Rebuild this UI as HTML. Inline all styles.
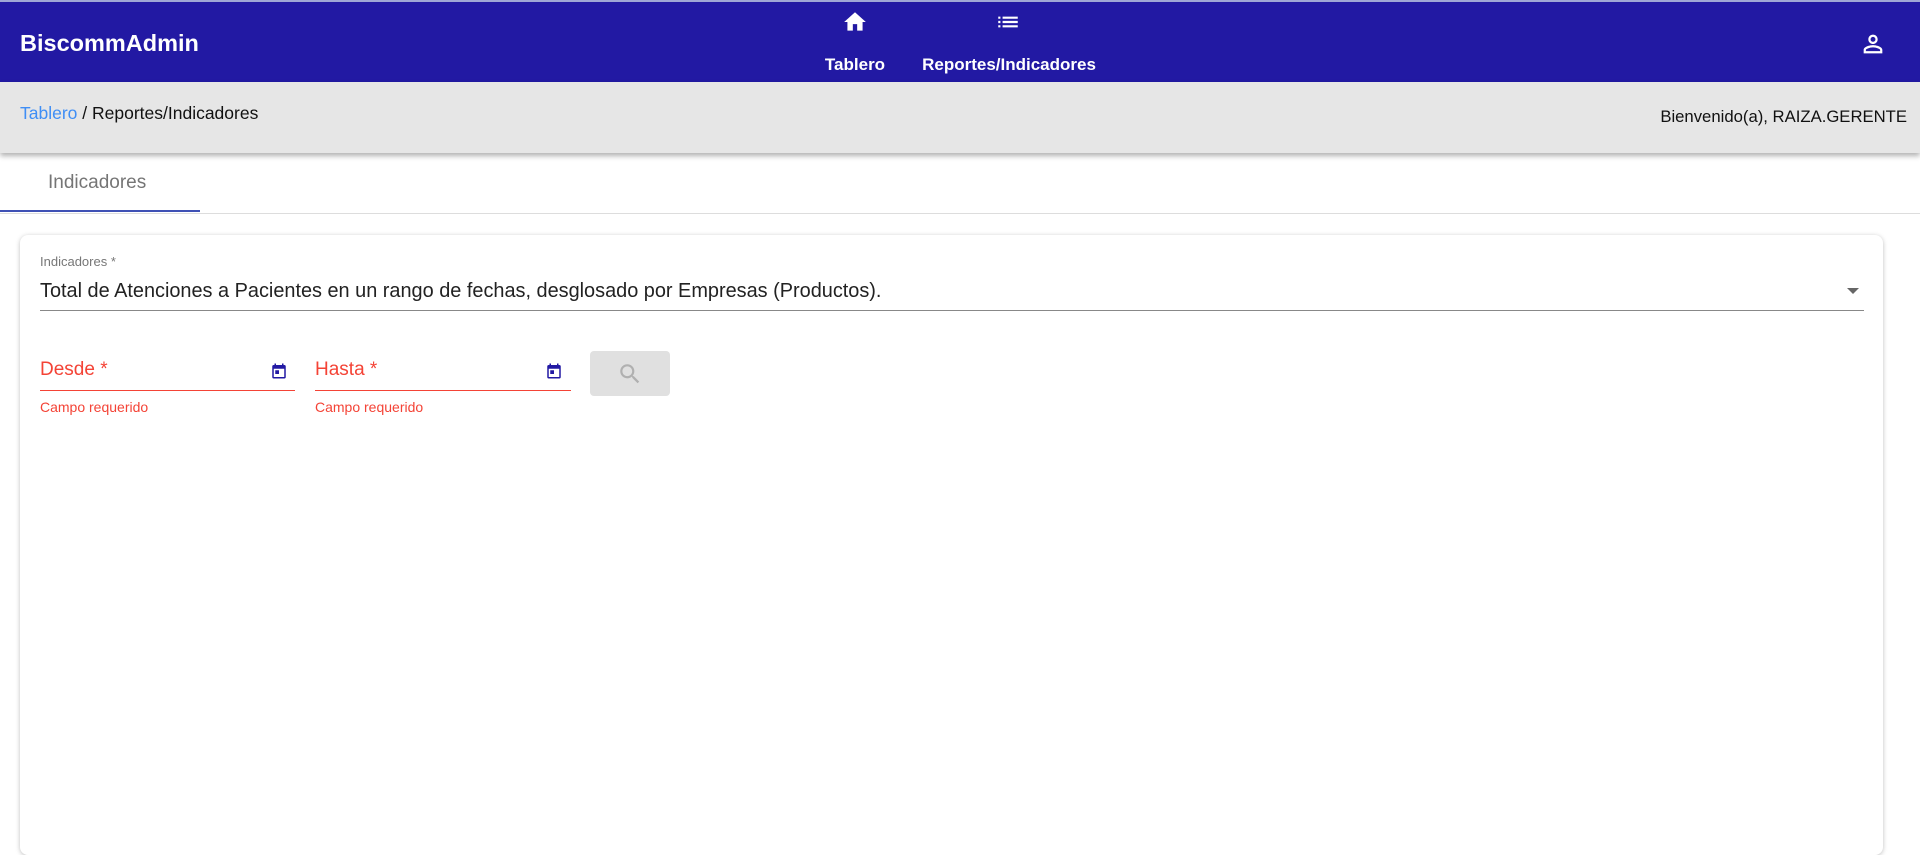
<!DOCTYPE html>
<html><head><meta charset="utf-8"><style>
*{box-sizing:border-box;margin:0;padding:0}
body{width:1920px;height:833px;overflow:hidden;background:#fff;font-family:"Liberation Sans",sans-serif;position:relative}
.hdr{position:absolute;left:0;top:0;width:1920px;height:82px;background:#2219a3;border-top:2px solid #9fa6d6;color:#fff}
.brand{position:absolute;left:20px;top:28px;font-size:23.5px;font-weight:bold}
.crumb{position:absolute;left:0;top:82px;width:1920px;height:71px;background:#e6e6e6;box-shadow:0 3px 5px rgba(0,0,0,.3);font-size:17px;color:#111}
.abs{position:absolute;white-space:nowrap}
.tabline{position:absolute;left:0;top:213px;width:1920px;height:1px;background:#ddd}
.card{position:absolute;left:20px;top:235px;width:1863px;height:620px;background:#fff;border-radius:8px;box-shadow:0 1px 5px rgba(0,0,0,.25)}
.red{color:#f44336}
</style></head><body>
<div class="hdr">
 <div class="brand">BiscommAdmin</div>
 <svg style="position:absolute;left:842px;top:7px" width="26" height="26" viewBox="0 0 24 24"><path fill="#fff" d="M10 20v-6h4v6h5v-8h3L12 3 2 12h3v8z"/></svg>
 <div class="abs" style="left:855px;top:53px;transform:translateX(-50%);font-weight:bold;font-size:17px">Tablero</div>
 <svg style="position:absolute;left:995px;top:7px" width="26" height="26" viewBox="0 0 24 24"><path fill="#fff" d="M3 13h2v-2H3v2zm0 4h2v-2H3v2zm0-8h2V7H3v2zm4 4h14v-2H7v2zm0 4h14v-2H7v2zM7 7v2h14V7H7z"/></svg>
 <div class="abs" style="left:1009px;top:53px;transform:translateX(-50%);font-weight:bold;font-size:17px">Reportes/Indicadores</div>
 <svg style="position:absolute;left:1859px;top:28px" width="28" height="28" viewBox="0 0 24 24"><path fill="#fff" d="M12 5.9a2.1 2.1 0 110 4.2 2.1 2.1 0 010-4.2m0 9c2.970 0 6.1 1.46 6.1 2.1v1.1H5.9V17c0-.64 3.13-2.1 6.1-2.1M12 4C9.79 4 8 5.79 8 8s1.79 4 4 4 4-1.79 4-4-1.790-4-4-4zm0 9c-2.67 0-8 1.34-8 4v3h16v-3c0-2.66-5.33-4-8-4z"/></svg>
</div>
<div class="crumb">
 <div class="abs" style="left:20px;top:21px;font-size:17.5px"><span style="color:#3f8ef5">Tablero</span> / Reportes/Indicadores</div>
 <div class="abs" style="right:13px;top:25px;font-size:16.7px">Bienvenido(a), RAIZA.GERENTE</div>
</div>
<div class="abs" style="left:48px;top:172px;font-size:19px;color:#757575">Indicadores</div>
<div class="tabline"></div>
<div class="abs" style="left:0;top:210px;width:200px;height:2px;background:#3f51b5"></div>
<div class="card">
 <div class="abs" style="left:20px;top:19px;font-size:13px;color:#777">Indicadores *</div>
 <div class="abs" style="left:20px;top:45px;font-size:19.9px;color:#222">Total de Atenciones a Pacientes en un rango de fechas, desglosado por Empresas (Productos).</div>
 <div class="abs" style="left:1827px;top:53px;width:0;height:0;border-left:6px solid transparent;border-right:6px solid transparent;border-top:6px solid #666"></div>
 <div class="abs" style="left:20px;top:75px;width:1824px;height:1px;background:#888"></div>

 <div class="abs red" style="left:20px;top:124px;font-size:19px">Desde *</div>
 <svg style="position:absolute;left:250px;top:127px" width="18" height="18" viewBox="0 0 24 24"><path fill="#2219a3" d="M19 4h-1V2h-2v2H8V2H6v2H5a2 2 0 00-2 2v14a2 2 0 002 2h14a2 2 0 002-2V6a2 2 0 00-2-2zm0 16H5V9h14v11zM7 11h5v5H7z"/></svg>
 <div class="abs" style="left:20px;top:155px;width:255px;height:1px;background:#f44336"></div>
 <div class="abs red" style="left:20px;top:164px;font-size:14px">Campo requerido</div>

 <div class="abs red" style="left:295px;top:124px;font-size:19px">Hasta *</div>
 <svg style="position:absolute;left:525px;top:127px" width="18" height="18" viewBox="0 0 24 24"><path fill="#2219a3" d="M19 4h-1V2h-2v2H8V2H6v2H5a2 2 0 00-2 2v14a2 2 0 002 2h14a2 2 0 002-2V6a2 2 0 00-2-2zm0 16H5V9h14v11zM7 11h5v5H7z"/></svg>
 <div class="abs" style="left:295px;top:155px;width:256px;height:1px;background:#f44336"></div>
 <div class="abs red" style="left:295px;top:164px;font-size:14px">Campo requerido</div>

 <div class="abs" style="left:570px;top:116px;width:80px;height:45px;background:#e0e0e0;border-radius:4px"></div>
 <svg style="position:absolute;left:597px;top:126px" width="26" height="26" viewBox="0 0 24 24"><path fill="#b0b0b0" d="M15.5 14h-.79l-.28-.27A6.47 6.47 0 0016 9.5 6.5 6.5 0 109.5 16c1.61 0 3.09-.59 4.23-1.57l.27.28v.79l5 4.99L20.49 19l-4.99-5zm-6 0C7.01 14 5 11.99 5 9.5S7.01 5 9.5 5 14 7.01 14 9.5 11.99 14 9.5 14z"/></svg>
</div>
</body></html>
